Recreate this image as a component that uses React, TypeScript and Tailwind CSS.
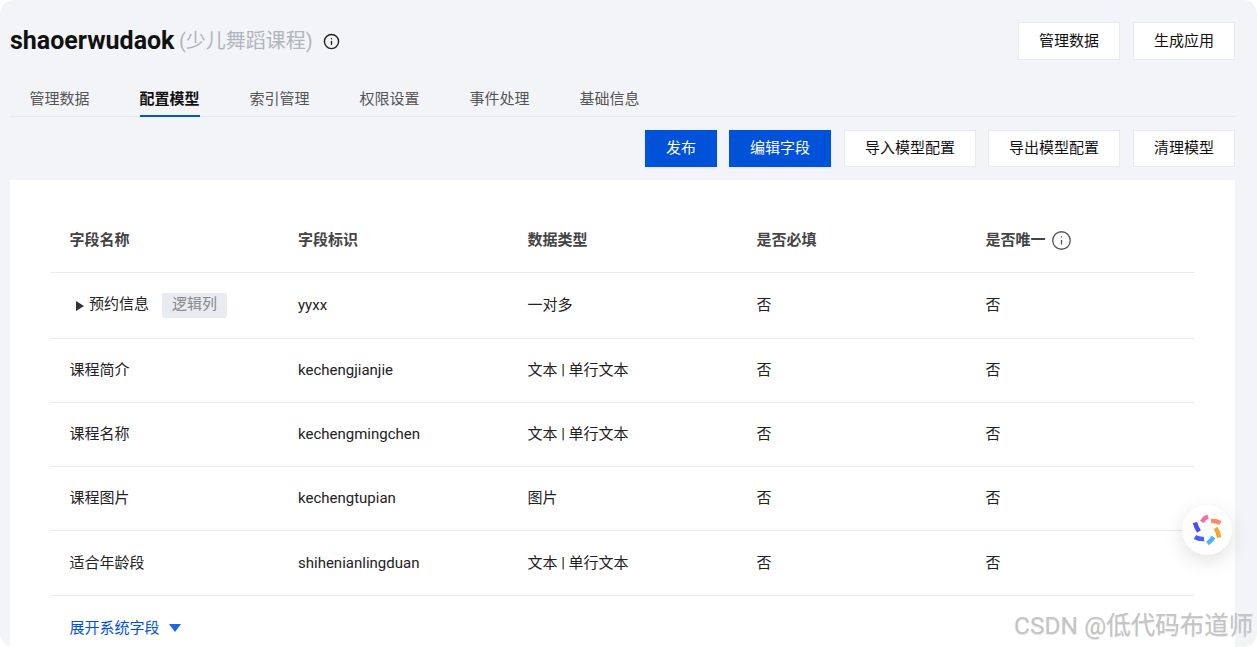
import { Info } from 'lucide-react';

const tabs = ['管理数据', '配置模型', '索引管理', '权限设置', '事件处理', '基础信息'];

const rows = [
  { name: '课程简介', id: 'kechengjianjie', type: '文本 | 单行文本', height: 'h-[64px]' },
  { name: '课程名称', id: 'kechengmingchen', type: '文本 | 单行文本', height: 'h-[64px]' },
  { name: '课程图片', id: 'kechengtupian', type: '图片', height: 'h-[64px]' },
  { name: '适合年龄段', id: 'shihenianlingduan', type: '文本 | 单行文本', height: 'h-[65px]' },
];

function Button({ label, primary, width }: { label: string; primary?: boolean; width: string }) {
  return (
    <button
      className={
        primary
          ? `h-[37px] ${width} bg-[#0052d9] text-white shadow-[0_1px_2px_rgba(0,82,217,0.08)]`
          : `h-[37px] ${width} bg-white border border-[#e7eaf1] text-[#111]`
      }
    >
      {label}
    </button>
  );
}

function Logo() {
  return (
    <div className="absolute left-[1182px] top-[505px] w-[50px] h-[50px] rounded-full bg-white shadow-[0_6px_20px_rgba(0,0,0,0.12)] flex items-center justify-center">
      <svg width="32" height="32" viewBox="-16 -16 32 32" fill="none" strokeWidth="4.5" strokeLinecap="butt">
        <path d="M-5 -8 Q-3 -12 1 -13.5" stroke="#ff6b9d" />
        <path d="M4 -9 Q9 -9.5 13.5 -7" stroke="#ff8a65" />
        <path d="M8.5 -2 Q11.5 2 12 7.5" stroke="#f5a623" />
        <path d="M6.5 7 Q4 11 0.5 13.5" stroke="#4db2ff" />
        <path d="M-3 9 Q-8 9.5 -12 7" stroke="#4a5cff" />
        <path d="M-8 1.5 Q-11 -3 -12 -7.5" stroke="#4a4aff" />
      </svg>
    </div>
  );
}

export default function App() {
  return (
    <div className="relative w-[1257px] h-[647px] overflow-hidden bg-white font-['Roboto','Noto_Sans_CJK_SC',sans-serif] text-[15px]">
      <div className="h-full rounded-[14px] bg-[#f2f4f8] pl-[10px] pr-[22px] flex flex-col">
        <div className="h-[82px] pt-[22px] flex justify-between shrink-0">
          <div className="flex items-center h-[38px]">
            <span className="text-[25px] font-bold text-[#111]">shaoerwudaok</span>
            <span className="ml-[4.5px] text-xl text-[#b1b5bd]">(少儿舞蹈课程)</span>
            <Info size={17} className="ml-[10px] text-[#222]" />
          </div>
          <div className="flex gap-[13px]">
            <button className="h-[38px] w-[102px] bg-white border border-[#e7eaf1] text-[#111]">管理数据</button>
            <button className="h-[38px] w-[102px] bg-white border border-[#e7eaf1] text-[#111]">生成应用</button>
          </div>
        </div>

        <div className="h-[35px] flex border-b border-[#e7eaf1] pl-[19.5px] gap-[50px] shrink-0">
          {tabs.map((tab) => (
            <div
              key={tab}
              className={
                tab === '配置模型'
                  ? 'h-[35px] leading-[35px] font-bold text-[#111] border-b-2 border-[#0052d9]'
                  : 'h-[34px] leading-[35px] text-[#555]'
              }
            >
              {tab}
            </div>
          ))}
        </div>

        <div className="h-[63px] pt-[13px] flex justify-end gap-[12px] shrink-0">
          <Button label="发布" primary width="w-[72px]" />
          <Button label="编辑字段" primary width="w-[102px]" />
          <Button label="导入模型配置" width="ml-px w-[132px]" />
          <Button label="导出模型配置" width="w-[132px]" />
          <Button label="清理模型" width="ml-px w-[102px]" />
        </div>

        <div className="flex-1 bg-white px-[40px] pt-[28px]">
          <div className="grid grid-cols-[229px_229.5px_229px_229px_1fr] h-[65px] pt-px items-center border-b border-[#e7eaf1] font-bold text-[#444]">
            <div className="pl-[19.5px]">字段名称</div>
            <div className="pl-[19px]">字段标识</div>
            <div className="pl-[19px]">数据类型</div>
            <div className="pl-[19px]">是否必填</div>
            <div className="pl-[19px] flex items-center gap-[5px]">
              是否唯一
              <Info size={21} strokeWidth={1.5} className="text-[#555]" />
            </div>
          </div>

          <div className="grid grid-cols-[229px_229.5px_229px_229px_1fr] h-[66px] items-center border-b border-[#e7eaf1] text-[#222]">
            <div className="pl-[26px] flex items-center">
              <span className="w-0 h-0 border-y-[5px] border-y-transparent border-l-[8px] border-l-[#333]"></span>
              <span className="ml-[5px] -mt-[3px]">预约信息</span>
              <span className="ml-[13px] w-[65px] h-[25px] leading-[23px] text-center rounded-[2px] bg-[#e8ebf0] text-[#888]">逻辑列</span>
            </div>
            <div className="pl-[19px]">yyxx</div>
            <div className="pl-[19px]">一对多</div>
            <div className="pl-[19px]">否</div>
            <div className="pl-[19px]">否</div>
          </div>

          {rows.map((row) => (
            <div
              key={row.id}
              className={`grid grid-cols-[229px_229.5px_229px_229px_1fr] ${row.height} items-center border-b border-[#e7eaf1] text-[#222]`}
            >
              <div className="pl-[19.5px]">{row.name}</div>
              <div className="pl-[19px]">{row.id}</div>
              <div className="pl-[19px]">{row.type}</div>
              <div className="pl-[19px]">否</div>
              <div className="pl-[19px]">否</div>
            </div>
          ))}

          <div className="pl-[19.5px] pt-[21px] flex items-center text-[#0052d9]">
            展开系统字段
            <span className="ml-[9px] w-0 h-0 border-x-[6px] border-x-transparent border-t-[8px] border-t-[#1e66e0]"></span>
          </div>
        </div>
      </div>

      <Logo />

      <div className="absolute left-[1014px] top-[610px] text-[24.5px] leading-[32px] text-[#c4c4c4] [text-shadow:0_1px_1px_rgba(0,0,0,0.12)] whitespace-nowrap">
        CSDN @低代码布道师
      </div>
    </div>
  );
}
